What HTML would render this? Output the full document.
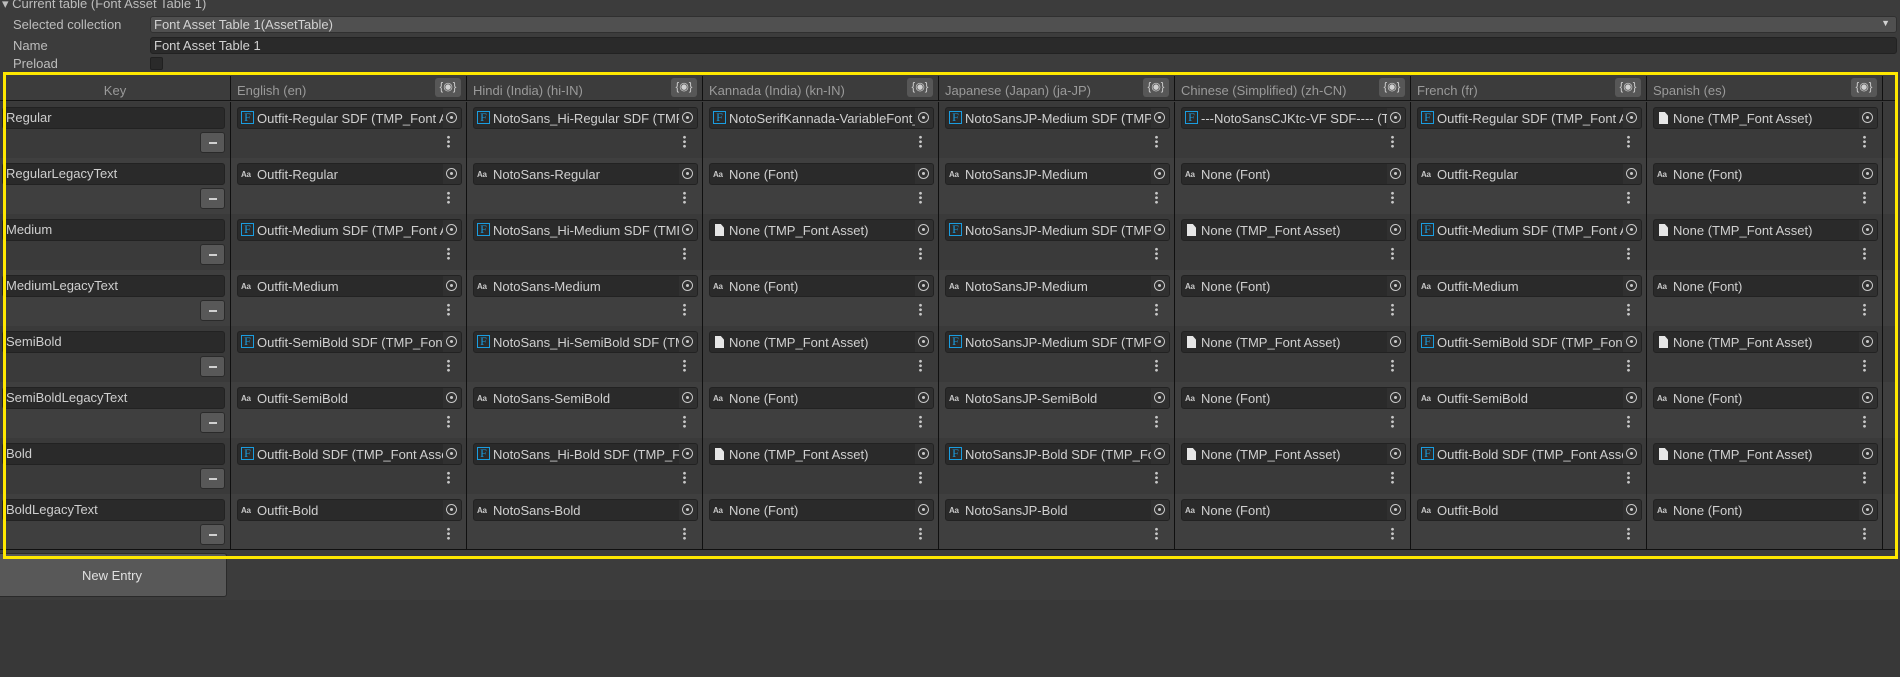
<!DOCTYPE html>
<html><head><meta charset="utf-8">
<style>
*{box-sizing:border-box;margin:0;padding:0}
body{width:1900px;height:677px;background:#383838;font-family:"Liberation Sans",sans-serif;font-size:13px;color:#c4c4c4;position:relative;overflow:hidden}
.top{position:absolute;left:0;top:0;width:1900px;height:600px;background:#3c3c3c}
.lbl{position:absolute;left:13px;color:#bdbdbd}
.inp{position:absolute;left:150px;right:3px;height:17px;border-radius:3px;padding:0 3px;color:#d2d2d2}
.row{position:absolute;left:0;width:1895px;height:56px;display:flex}
.row.a{background:#3a3a3a}.row.b{background:#3f3f3f}
.k{width:231px;border-right:1px solid #101010;position:relative;flex:none}
.c{width:236px;border-right:1px solid #101010;position:relative;flex:none}
.kf{position:absolute;left:2px;top:5px;width:223px;height:22px;background:#2a2a2a;border:1px solid #222;border-radius:3px;padding:2px 3px;color:#cfcfcf;white-space:nowrap}
.mb{position:absolute;left:200px;top:30px;width:25px;height:21px;background:#585858;border:1px solid #2a2a2a;border-radius:3px}
.mb:after{content:"";position:absolute;left:8px;top:9px;width:8px;height:2px;background:#d0d0d0}
.f{position:absolute;left:6px;top:5px;width:225px;height:22px;background:#2a2a2a;border:1px solid #222;border-radius:3px;overflow:hidden;white-space:nowrap;padding:3px 20px 0 19px;color:#d0d0d0}
.f .t{position:absolute;right:0;top:0;width:18px;height:20px;background:#303030}
.f .t:before{content:"";position:absolute;left:3px;top:4px;width:9px;height:9px;border:1.5px solid #c8c8c8;border-radius:50%}
.f .t:after{content:"";position:absolute;left:7px;top:8px;width:3px;height:3px;background:#c8c8c8;border-radius:50%}
.F{position:absolute;left:3px;top:3px;width:13px;height:13px;border:1.3px solid #1a9de0;color:#1a9de0;font-size:12px;line-height:11px;text-align:center;font-family:"Liberation Serif",serif;font-style:normal}
.A{position:absolute;left:3px;top:6px;font-size:8px;font-weight:bold;color:#c8c8c8;font-style:normal;letter-spacing:-.3px}
.D{position:absolute;left:5px;top:4px;width:9px;height:12px;background:#e6e6e6;clip-path:polygon(0 0,65% 0,100% 30%,100% 100%,0 100%)}
.d{position:absolute;left:216px;top:33px;width:3px;height:13px;background:radial-gradient(circle,#c8c8c8 1.2px,transparent 1.6px) 0 0/3px 4.5px repeat-y}
.h{position:absolute;left:0;top:76px;width:1895px;height:25px;background:#3c3c3c;border-bottom:1px solid #161616;display:flex}
.h>div{height:25px;position:relative;color:#9a9a9a;padding:7px 6px 0}
.g{position:absolute;right:5px;top:2px;width:26px;height:19px;background:#575757;border-radius:3px;color:#d0d0d0;font-size:11px;text-align:center;line-height:18px}
</style></head><body>
<div class="top"></div>
<div style="position:absolute;left:2px;top:-4px;color:#bdbdbd">&#9662; Current table (Font Asset Table 1)</div>
<div class="lbl" style="top:17px">Selected collection</div>
<div class="inp" style="top:16px;background:#505050;border:1px solid #303030">Font Asset Table 1(AssetTable)<span style="position:absolute;right:6px;top:1px;font-size:9px">&#9660;</span></div>
<div class="lbl" style="top:38px">Name</div>
<div class="inp" style="top:37px;background:#2a2a2a;border:1px solid #222">Font Asset Table 1</div>
<div class="lbl" style="top:56px">Preload</div>
<div style="position:absolute;left:150px;top:57px;width:13px;height:13px;background:#2a2a2a;border:1px solid #202020;border-radius:2px"></div>

<div class="h">
<div style="width:231px;text-align:center;border-right:1px solid #101010">Key</div>
<div class="c" style="height:25px">English (en)<span class="g">{&#9673;}</span></div>
<div class="c" style="height:25px">Hindi (India) (hi-IN)<span class="g">{&#9673;}</span></div>
<div class="c" style="height:25px">Kannada (India) (kn-IN)<span class="g">{&#9673;}</span></div>
<div class="c" style="height:25px">Japanese (Japan) (ja-JP)<span class="g">{&#9673;}</span></div>
<div class="c" style="height:25px">Chinese (Simplified) (zh-CN)<span class="g">{&#9673;}</span></div>
<div class="c" style="height:25px">French (fr)<span class="g">{&#9673;}</span></div>
<div class="c" style="height:25px">Spanish (es)<span class="g">{&#9673;}</span></div>
</div>

<div class="row a" style="top:102px"><div class="k"><div class="kf">Regular</div><div class="mb"></div></div>
<div class="c"><div class="f"><i class="F">F</i>Outfit-Regular SDF (TMP_Font Asset)<b class="t"></b></div><div class="d"></div></div>
<div class="c"><div class="f"><i class="F">F</i>NotoSans_Hi-Regular SDF (TMP_Font Asset)<b class="t"></b></div><div class="d"></div></div>
<div class="c"><div class="f"><i class="F">F</i>NotoSerifKannada-VariableFont_wght SDF<b class="t"></b></div><div class="d"></div></div>
<div class="c"><div class="f"><i class="F">F</i>NotoSansJP-Medium SDF (TMP_Font Asset)<b class="t"></b></div><div class="d"></div></div>
<div class="c"><div class="f"><i class="F">F</i>---NotoSansCJKtc-VF SDF---- (TMP_Font Asset)<b class="t"></b></div><div class="d"></div></div>
<div class="c"><div class="f"><i class="F">F</i>Outfit-Regular SDF (TMP_Font Asset)<b class="t"></b></div><div class="d"></div></div>
<div class="c"><div class="f"><i class="D"></i>None (TMP_Font Asset)<b class="t"></b></div><div class="d"></div></div>
</div>

<div class="row b" style="top:158px"><div class="k"><div class="kf">RegularLegacyText</div><div class="mb"></div></div>
<div class="c"><div class="f"><i class="A">Aa</i>Outfit-Regular<b class="t"></b></div><div class="d"></div></div>
<div class="c"><div class="f"><i class="A">Aa</i>NotoSans-Regular<b class="t"></b></div><div class="d"></div></div>
<div class="c"><div class="f"><i class="A">Aa</i>None (Font)<b class="t"></b></div><div class="d"></div></div>
<div class="c"><div class="f"><i class="A">Aa</i>NotoSansJP-Medium<b class="t"></b></div><div class="d"></div></div>
<div class="c"><div class="f"><i class="A">Aa</i>None (Font)<b class="t"></b></div><div class="d"></div></div>
<div class="c"><div class="f"><i class="A">Aa</i>Outfit-Regular<b class="t"></b></div><div class="d"></div></div>
<div class="c"><div class="f"><i class="A">Aa</i>None (Font)<b class="t"></b></div><div class="d"></div></div>
</div>

<div class="row a" style="top:214px"><div class="k"><div class="kf">Medium</div><div class="mb"></div></div>
<div class="c"><div class="f"><i class="F">F</i>Outfit-Medium SDF (TMP_Font Asset)<b class="t"></b></div><div class="d"></div></div>
<div class="c"><div class="f"><i class="F">F</i>NotoSans_Hi-Medium SDF (TMP_Font Asset)<b class="t"></b></div><div class="d"></div></div>
<div class="c"><div class="f"><i class="D"></i>None (TMP_Font Asset)<b class="t"></b></div><div class="d"></div></div>
<div class="c"><div class="f"><i class="F">F</i>NotoSansJP-Medium SDF (TMP_Font Asset)<b class="t"></b></div><div class="d"></div></div>
<div class="c"><div class="f"><i class="D"></i>None (TMP_Font Asset)<b class="t"></b></div><div class="d"></div></div>
<div class="c"><div class="f"><i class="F">F</i>Outfit-Medium SDF (TMP_Font Asset)<b class="t"></b></div><div class="d"></div></div>
<div class="c"><div class="f"><i class="D"></i>None (TMP_Font Asset)<b class="t"></b></div><div class="d"></div></div>
</div>

<div class="row b" style="top:270px"><div class="k"><div class="kf">MediumLegacyText</div><div class="mb"></div></div>
<div class="c"><div class="f"><i class="A">Aa</i>Outfit-Medium<b class="t"></b></div><div class="d"></div></div>
<div class="c"><div class="f"><i class="A">Aa</i>NotoSans-Medium<b class="t"></b></div><div class="d"></div></div>
<div class="c"><div class="f"><i class="A">Aa</i>None (Font)<b class="t"></b></div><div class="d"></div></div>
<div class="c"><div class="f"><i class="A">Aa</i>NotoSansJP-Medium<b class="t"></b></div><div class="d"></div></div>
<div class="c"><div class="f"><i class="A">Aa</i>None (Font)<b class="t"></b></div><div class="d"></div></div>
<div class="c"><div class="f"><i class="A">Aa</i>Outfit-Medium<b class="t"></b></div><div class="d"></div></div>
<div class="c"><div class="f"><i class="A">Aa</i>None (Font)<b class="t"></b></div><div class="d"></div></div>
</div>

<div class="row a" style="top:326px"><div class="k"><div class="kf">SemiBold</div><div class="mb"></div></div>
<div class="c"><div class="f"><i class="F">F</i>Outfit-SemiBold SDF (TMP_Font Asset)<b class="t"></b></div><div class="d"></div></div>
<div class="c"><div class="f"><i class="F">F</i>NotoSans_Hi-SemiBold SDF (TMP_Font Asset)<b class="t"></b></div><div class="d"></div></div>
<div class="c"><div class="f"><i class="D"></i>None (TMP_Font Asset)<b class="t"></b></div><div class="d"></div></div>
<div class="c"><div class="f"><i class="F">F</i>NotoSansJP-Medium SDF (TMP_Font Asset)<b class="t"></b></div><div class="d"></div></div>
<div class="c"><div class="f"><i class="D"></i>None (TMP_Font Asset)<b class="t"></b></div><div class="d"></div></div>
<div class="c"><div class="f"><i class="F">F</i>Outfit-SemiBold SDF (TMP_Font Asset)<b class="t"></b></div><div class="d"></div></div>
<div class="c"><div class="f"><i class="D"></i>None (TMP_Font Asset)<b class="t"></b></div><div class="d"></div></div>
</div>

<div class="row b" style="top:382px"><div class="k"><div class="kf">SemiBoldLegacyText</div><div class="mb"></div></div>
<div class="c"><div class="f"><i class="A">Aa</i>Outfit-SemiBold<b class="t"></b></div><div class="d"></div></div>
<div class="c"><div class="f"><i class="A">Aa</i>NotoSans-SemiBold<b class="t"></b></div><div class="d"></div></div>
<div class="c"><div class="f"><i class="A">Aa</i>None (Font)<b class="t"></b></div><div class="d"></div></div>
<div class="c"><div class="f"><i class="A">Aa</i>NotoSansJP-SemiBold<b class="t"></b></div><div class="d"></div></div>
<div class="c"><div class="f"><i class="A">Aa</i>None (Font)<b class="t"></b></div><div class="d"></div></div>
<div class="c"><div class="f"><i class="A">Aa</i>Outfit-SemiBold<b class="t"></b></div><div class="d"></div></div>
<div class="c"><div class="f"><i class="A">Aa</i>None (Font)<b class="t"></b></div><div class="d"></div></div>
</div>

<div class="row a" style="top:438px"><div class="k"><div class="kf">Bold</div><div class="mb"></div></div>
<div class="c"><div class="f"><i class="F">F</i>Outfit-Bold SDF (TMP_Font Asset)<b class="t"></b></div><div class="d"></div></div>
<div class="c"><div class="f"><i class="F">F</i>NotoSans_Hi-Bold SDF (TMP_Font Asset)<b class="t"></b></div><div class="d"></div></div>
<div class="c"><div class="f"><i class="D"></i>None (TMP_Font Asset)<b class="t"></b></div><div class="d"></div></div>
<div class="c"><div class="f"><i class="F">F</i>NotoSansJP-Bold SDF (TMP_Font Asset)<b class="t"></b></div><div class="d"></div></div>
<div class="c"><div class="f"><i class="D"></i>None (TMP_Font Asset)<b class="t"></b></div><div class="d"></div></div>
<div class="c"><div class="f"><i class="F">F</i>Outfit-Bold SDF (TMP_Font Asset)<b class="t"></b></div><div class="d"></div></div>
<div class="c"><div class="f"><i class="D"></i>None (TMP_Font Asset)<b class="t"></b></div><div class="d"></div></div>
</div>

<div class="row b" style="top:494px;border-bottom:1px solid #101010;height:56px"><div class="k"><div class="kf">BoldLegacyText</div><div class="mb"></div></div>
<div class="c"><div class="f"><i class="A">Aa</i>Outfit-Bold<b class="t"></b></div><div class="d"></div></div>
<div class="c"><div class="f"><i class="A">Aa</i>NotoSans-Bold<b class="t"></b></div><div class="d"></div></div>
<div class="c"><div class="f"><i class="A">Aa</i>None (Font)<b class="t"></b></div><div class="d"></div></div>
<div class="c"><div class="f"><i class="A">Aa</i>NotoSansJP-Bold<b class="t"></b></div><div class="d"></div></div>
<div class="c"><div class="f"><i class="A">Aa</i>None (Font)<b class="t"></b></div><div class="d"></div></div>
<div class="c"><div class="f"><i class="A">Aa</i>Outfit-Bold<b class="t"></b></div><div class="d"></div></div>
<div class="c"><div class="f"><i class="A">Aa</i>None (Font)<b class="t"></b></div><div class="d"></div></div>
</div>

<div style="position:absolute;left:-3px;top:553px;width:230px;height:44px;background:#585858;border:1px solid #2a2a2a;border-radius:3px;text-align:center;line-height:44px;color:#e0e0e0">New Entry</div>
<div style="position:absolute;left:3px;top:72px;width:1895px;height:487px;border:3.5px solid #ffe800"></div>
</body></html>
